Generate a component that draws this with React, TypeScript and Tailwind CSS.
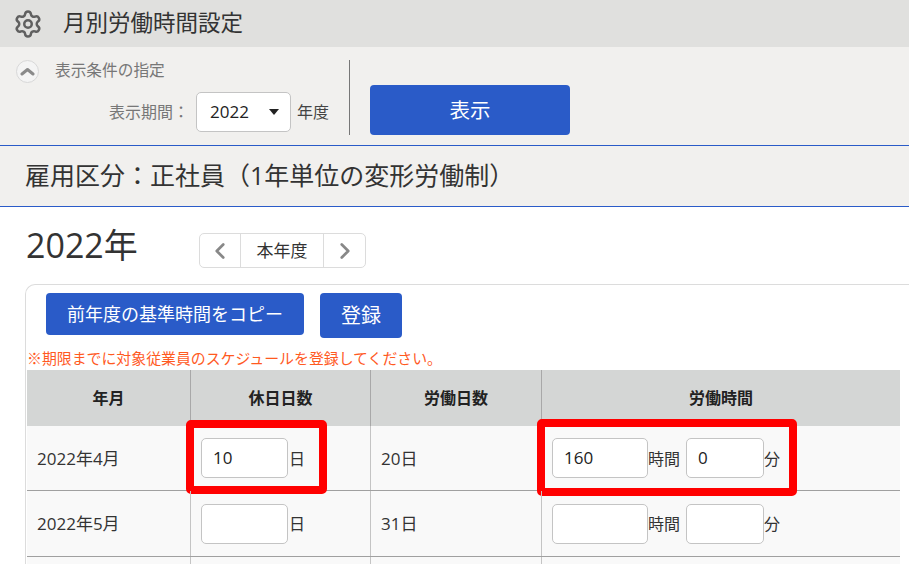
import { ChevronLeft, ChevronRight, Settings } from 'lucide-react';

const FONT = { fontFamily: '"Open Sans", "Noto Sans CJK JP", sans-serif' };

function NumInput({ value, width }: { value?: string; width: string }) {
  return (
    <div className={`${width} h-10 bg-white border border-[#c4c4c4] rounded-[5px] pl-[11px] flex items-center text-[17px] text-[#222]`}>
      {value}
    </div>
  );
}

function Row({ month, rest, work, hours, mins, highlight, height }: { month?: string; rest?: string; work?: string; hours?: string; mins?: string; highlight?: boolean; height: string }) {
  const showInputs = !!month;
  return (
    <div className={`grid grid-cols-[163px_180px_171px_359px] ${height} bg-[#f9f9f9] border-b border-[#a0a0a0] text-[17px] text-[#333]`}>
      <div className="pl-[10px] flex items-center pt-[1px]">{month}</div>
      <div className="relative border-l border-[#c4c4c4] pl-[10px] flex items-center gap-[1px]">
        {showInputs && (
          <>
            <NumInput value={rest} width="w-[87px]" />
            <span className="text-[16px] pt-[1px]">日</span>
          </>
        )}
        {highlight && <div className="absolute left-[-5px] top-[-6px] w-[141px] h-[74px] border-[8px] border-[#ff0000] rounded-[5px]" />}
      </div>
      <div className="border-l border-[#c4c4c4] pl-[10px] flex items-center pt-[1px]">{work}</div>
      <div className="relative border-l border-[#c4c4c4] pl-[10px] flex items-center">
        {showInputs && (
          <>
            <NumInput value={hours} width="w-[96px]" />
            <span className="w-[38px] text-[16px] pt-[1px]">時間</span>
            <NumInput value={mins} width="w-[78px]" />
            <span className="text-[16px] pt-[1px]">分</span>
          </>
        )}
        {highlight && <div className="absolute left-[-5px] top-[-7px] w-[260px] h-[77px] border-[8px] border-[#ff0000] rounded-[5px]" />}
      </div>
    </div>
  );
}

export default function App() {
  return (
    <div className="w-[909px] h-[564px] overflow-hidden bg-white text-[#333]" style={FONT}>
      {/* Title */}
      <div className="h-[47px] bg-[#e0e0de] flex items-center pl-[13px]">
        <Settings className="w-[30px] h-[30px] text-[#606060]" strokeWidth={2} />
        <h1 className="ml-[20px] text-[22.5px] text-[#333] leading-none">月別労働時間設定</h1>
      </div>

      {/* Filter */}
      <div className="h-[98px] bg-[#f1f0ee] flex border-b border-[#2a5bc8] box-content">
        <div className="w-[349px] relative">
          <div className="flex items-center pl-[16px] pt-[12px]">
            <div className="w-[23px] h-[23px] rounded-full bg-[#f4f4f4] border border-[#d8d8d8] flex items-center justify-center">
              <svg width="15" height="9" viewBox="0 0 15 9" fill="none" stroke="#8a8a8a" strokeWidth="3" strokeLinecap="round" strokeLinejoin="round">
                <polyline points="2,7 7.5,2.5 13,7" />
              </svg>
            </div>
            <span className="ml-[16px] mb-[3px] text-[15.7px] leading-[22px] text-[#777]">表示条件の指定</span>
          </div>
          <div className="flex items-center mt-[8px] pl-[109px]">
            <span className="text-[16px] text-[#777] w-[87px]">表示期間：</span>
            <div className="w-[95px] h-10 bg-white border border-[#c4c4c4] rounded-[5px] flex items-center justify-between pl-[13px] pr-[11px] text-[17px] text-[#222]">
              2022
              <span className="w-0 h-0 border-x-[5px] border-x-transparent border-t-[6px] border-t-[#222]" />
            </div>
            <span className="ml-[6px] text-[16px] text-[#444]">年度</span>
          </div>
        </div>
        <div className="w-px h-[75px] mt-[13px] bg-[#777]" />
        <div className="ml-[20px] mt-[38px] w-[200px] h-[50px] bg-[#2a5bc8] rounded-[4px] text-white text-[20.5px] flex items-center justify-center">
          表示
        </div>
      </div>

      {/* Section */}
      <div className="h-[60px] bg-[#f1f0ee] border-b border-[#2a5bc8] box-content flex items-center pl-[25px] text-[25px] text-[#333] whitespace-nowrap">
        雇用区分：正社員（1年単位の変形労働制）
      </div>

      {/* Year nav */}
      <div className="flex items-start pl-[26px] pt-[16px] h-[77px]">
        <div className="text-[34px] leading-[44px] text-[#333] w-[173px]">2022年</div>
        <div className="mt-[10px] w-[167px] h-[35px] border border-[#dcdcdc] rounded-[5px] flex items-stretch bg-white">
          <div className="w-[41px] border-r border-[#dcdcdc] flex items-center justify-center">
            <ChevronLeft className="w-[26px] h-[26px] text-[#888]" strokeWidth={2.5} />
          </div>
          <div className="w-[83px] border-r border-[#dcdcdc] flex items-center justify-center text-[17px] text-[#333]">本年度</div>
          <div className="flex-1 flex items-center justify-center">
            <ChevronRight className="w-[26px] h-[26px] text-[#888]" strokeWidth={2.5} />
          </div>
        </div>
      </div>

      {/* Card */}
      <div className="ml-[25px] w-[884px] border border-[#dcdcdc] border-r-0 rounded-tl-[10px] pl-px">
        <div className="flex items-start pl-[19px] pt-[8px] gap-[16px]">
          <div className="w-[258px] h-[42px] bg-[#2a5bc8] rounded-[4px] text-white text-[18px] flex items-center justify-center">
            前年度の基準時間をコピー
          </div>
          <div className="w-[82px] h-[45px] bg-[#2a5bc8] rounded-[4px] text-white text-[20px] flex items-center justify-center">
            登録
          </div>
        </div>
        <div className="h-[32px] pt-[9px] text-[14.9px] leading-[22px] text-[#ff5a1f] whitespace-nowrap">
          ※期限までに対象従業員のスケジュールを登録してください。
        </div>
        <div className="grid grid-cols-[163px_180px_171px_359px] h-[56px] bg-[#d4d6d5] text-[16px] font-bold text-[#222] w-[873px]">
          <div className="flex items-center justify-center">年月</div>
          <div className="flex items-center justify-center border-l border-[#a8a8a8]">休日日数</div>
          <div className="flex items-center justify-center border-l border-[#a8a8a8]">労働日数</div>
          <div className="flex items-center justify-center border-l border-[#a8a8a8]">労働時間</div>
        </div>
        <div className="w-[873px]">
          <Row height="h-[65px]" month="2022年4月" rest="10" work="20日" hours="160" mins="0" highlight />
          <Row height="h-[66px]" month="2022年5月" work="31日" />
          <Row height="h-[66px]" />
        </div>
      </div>
    </div>
  );
}
